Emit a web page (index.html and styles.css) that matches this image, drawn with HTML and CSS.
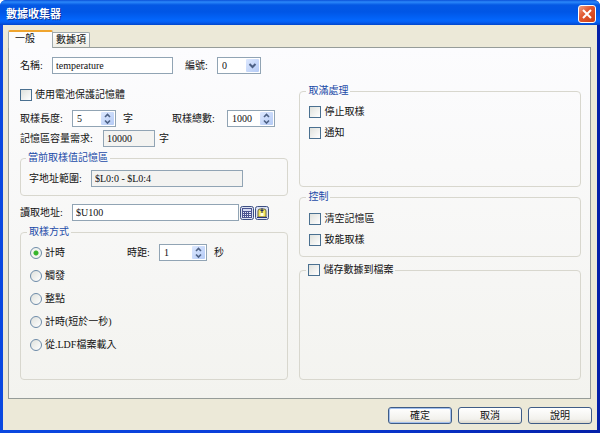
FILE: index.html
```html
<!DOCTYPE html>
<html lang="zh-Hant">
<head>
<meta charset="utf-8">
<title>數據收集器</title>
<link rel="stylesheet" href="styles.css">
</head>
<body>
<svg class="defs" aria-hidden="true">
  <symbol id="arrows" viewBox="0 0 13 13">
    <path d="M4 5 6.500 2.500 9 5M4 8.500l2.500 2.500L9 8.500" fill="none" stroke="#4d6185" stroke-width="1.600"/>
  </symbol>
</svg>
<form class="window">
  <header class="titlebar">
    <h1>數據收集器</h1>
    <button type="button" class="close" aria-label="關閉">
      <svg viewBox="0 0 16 16"><path d="M4 4l8 8M12 4l-8 8" stroke="#fff" stroke-width="2"/></svg>
    </button>
  </header>
  <main class="client">
    <nav class="tabs" role="tablist">
      <button type="button" role="tab" class="tab active" aria-selected="true">一般</button>
      <button type="button" role="tab" class="tab" aria-selected="false">數據項</button>
    </nav>
    <section class="panel">
      <div class="row name-row">
        <label class="caption" for="name">名稱:</label>
        <input class="box name" id="name" type="text" value="temperature">
        <label class="caption id-label" for="number">編號:</label>
        <span class="box combo">
          <select id="number"><option>0</option></select>
          <svg class="arrow" viewBox="0 0 13 13" aria-hidden="true"><path d="M3.500 5l3 3 3-3" fill="none" stroke="#4d6185" stroke-width="2"/></svg>
        </span>
      </div>
      <div class="columns">
        <div class="column left">
          <label class="row check"><input type="checkbox">使用電池保護記憶體</label>
          <div class="row length-row">
            <label class="caption wide" for="length">取樣長度:</label>
            <span class="box spin"><input id="length" type="number" value="5"><svg class="arrow" aria-hidden="true"><use href="#arrows"/></svg></span>
            <span class="unit">字</span>
            <label class="caption wide total-label" for="total">取樣總數:</label>
            <span class="box spin large"><input id="total" type="number" value="1000"><svg class="arrow" aria-hidden="true"><use href="#arrows"/></svg></span>
          </div>
          <div class="row memory-row">
            <label class="caption memory" for="memory">記憶區容量需求:</label>
            <input class="box readonly amount" id="memory" type="text" value="10000" readonly>
            <span class="unit near">字</span>
          </div>
          <fieldset class="range">
            <legend>當前取樣值記憶區</legend>
            <div class="row">
              <label class="caption range-label" for="range">字地址範圍:</label>
              <input class="box readonly address" id="range" type="text" value="$L0:0 - $L0:4" readonly>
            </div>
          </fieldset>
          <div class="row read-row">
            <label class="caption wide" for="read">讀取地址:</label>
            <input class="box read" id="read" type="text" value="$U100">
            <button type="button" class="tool" aria-label="鍵盤">
              <svg viewBox="0 0 14 14"><rect x=".5" y=".5" width="13" height="13" rx="2" fill="#dce2f2" stroke="#3c4f83"/><path d="M2 2h10v10H2z" fill="#4a5490"/><path d="M3 3h8v2H3z" fill="#d5dcf4"/><path d="M3 6h1v1H3zM5 6h1v1H5zM7 6h1v1H7zM9 6h2v1H9zM3 8h1v1H3zM5 8h1v1H5zM7 8h1v1H7zM9 8h2v1H9zM3 10h1v1H3zM5 10h1v1H5zM7 10h1v1H7zM9 10h2v1H9z" fill="#e8ecff"/></svg>
            </button>
            <button type="button" class="tool" aria-label="標籤">
              <svg viewBox="0 0 14 14"><rect x=".5" y=".5" width="13" height="13" rx="2" fill="#dce2f2" stroke="#3c4f83"/><path d="M3 11V5q0-2 2-2h4q2 0 2 2v6z" fill="#f3e65c" stroke="#6a6740"/><path d="M5.500 7h3v3h-3z" fill="#fffde0"/><path d="M7 2v5M5.500 4.500h3" stroke="#202b66"/><path d="M2 11.500h10" stroke="#25317c"/></svg>
            </button>
          </div>
          <fieldset class="method">
            <legend>取樣方式</legend>
            <div class="row option">
              <label class="radio"><input type="radio" name="method" checked>計時</label>
              <label class="caption interval-label" for="interval">時距:</label>
              <span class="box spin large"><input id="interval" type="number" value="1"><svg class="arrow" aria-hidden="true"><use href="#arrows"/></svg></span>
              <span class="unit">秒</span>
            </div>
            <label class="row option radio"><input type="radio" name="method">觸發</label>
            <label class="row option radio"><input type="radio" name="method">整點</label>
            <label class="row option radio"><input type="radio" name="method">計時(短於一秒)</label>
            <label class="row option radio"><input type="radio" name="method">從.LDF檔案載入</label>
          </fieldset>
        </div>
        <div class="column right">
          <fieldset class="full">
            <legend>取滿處理</legend>
            <label class="row check"><input type="checkbox">停止取樣</label>
            <label class="row check"><input type="checkbox">通知</label>
          </fieldset>
          <fieldset class="control">
            <legend>控制</legend>
            <label class="row check"><input type="checkbox">清空記憶區</label>
            <label class="row check"><input type="checkbox">致能取樣</label>
          </fieldset>
          <fieldset class="save">
            <legend><label class="check"><input type="checkbox">儲存數據到檔案</label></legend>
          </fieldset>
        </div>
      </div>
    </section>
    <footer class="actions">
      <button type="submit" class="default">確定</button>
      <button type="button">取消</button>
      <button type="button">說明</button>
    </footer>
  </main>
</form>
</body>
</html>
```
FILE: styles.css
```css
* { box-sizing: border-box; }

body {
  margin: 0;
  background: #fff;
  color: #111;
  font: 10px/14px "Liberation Serif", "Noto Sans CJK TC", serif;
}

button, input, select { font: inherit; color: inherit; margin: 0; padding: 0; }
.defs { display: none; }

.window {
  display: flex;
  flex-direction: column;
  min-height: 100vh;
  padding: 0 3px 3px;
  border-radius: 6px 6px 0 0;
  background: linear-gradient(90deg, #0a48e0, #0a3cd8 50%, #0420a8);
  overflow: hidden;
}

.titlebar {
  display: flex;
  align-items: center;
  justify-content: space-between;
  height: 25px;
  margin: 0 -3px;
  padding: 2px 4px 0 6px;
  background: linear-gradient(#0a50d8, #2b88fa 2px, #0458e4 5px, #0056e6 12px, #0366fc 20px, #0560f4 22px, #0146cc);
}

.titlebar h1 {
  margin: 0;
  color: #fff;
  font-size: 11px;
  text-shadow: 1px 1px #0b2f94;
}

.close {
  width: 18px;
  height: 18px;
  border: 1px solid #fff;
  border-radius: 3px;
  background: linear-gradient(135deg, #f0a083, #e25a32 40%, #cc3d14);
}
.close svg { display: block; width: 16px; height: 16px; }

.client {
  display: flex;
  flex: 1;
  flex-direction: column;
  padding: 5px 6px 6px 5px;
  background: #ece9d8;
}

.tabs { display: flex; align-items: flex-end; height: 17px; }

.tab {
  height: 15px;
  padding: 0 3px;
  border: 1px solid #a0aaae;
  border-left: 0;
  border-bottom: 0;
  border-radius: 0 2px 0 0;
  background: linear-gradient(#fff, #efeee6);
}

.tab.active {
  z-index: 1;
  height: 18px;
  margin-bottom: -1px;
  padding: 0 17px 2px 6px;
  border-left: 1px solid #a0aaae;
  border-top: 2px solid #f0a52e;
  border-radius: 2px 2px 0 0;
  background: #fcfcfd;
}

.panel {
  display: flex;
  flex: 1;
  flex-direction: column;
  gap: 10px;
  padding: 9px 9px 18px 11px;
  border: 1px solid #969c99;
  background: linear-gradient(#fcfcfe, #f3f3ef);
}

.columns {
  display: grid;
  flex: 1;
  grid-template-columns: 268fr 281fr;
  gap: 11px;
}
.column { display: flex; flex-direction: column; min-width: 0; }
.left { padding-top: 2px; }

.row { display: flex; align-items: center; height: 17px; }
.caption { flex: none; }
.name-row .caption { width: 32px; }
.caption.wide { width: 52px; }
.caption.memory { width: 83px; }
.caption.range-label { width: 62px; }
.name-row .id-label { width: 32px; margin-left: 12px; }

.box {
  height: 17px;
  border: 1px solid #91a4b4;
  background: #fff;
}
input.box { min-width: 0; padding: 0 3px; }
.box.readonly { background: #f3f3f1; }
.name { width: 121px; }
.amount { width: 52px; }
.address { width: 152px; }
.read { width: 167px; }

.combo, .spin { display: flex; flex: none; align-items: center; width: 44px; padding: 1px; }
.spin.large { width: 48px; }
.combo select, .spin input {
  flex: 1;
  min-width: 0;
  height: 13px;
  padding-left: 3px;
  border: 0;
  background: none;
  appearance: none;
}
.spin input { appearance: textfield; }
.spin input::-webkit-inner-spin-button { appearance: none; }

.arrow {
  flex: none;
  width: 13px;
  height: 13px;
  border-radius: 1px;
  background: linear-gradient(135deg, #dde8fe, #b5cbf6);
}

.unit { margin-left: 7px; }
.unit.near { margin-left: 4px; }

.length-row { margin-top: 7px; }
.total-label { margin-left: 39px; }
.caption.wide.total-label { width: 55px; }
.memory-row { margin-top: 3px; }

input[type="checkbox"], input[type="radio"] {
  flex: none;
  width: 12px;
  height: 12px;
  border: 1px solid #4a7090;
  background: linear-gradient(135deg, #dfe1dc, #fff);
  appearance: none;
}
input[type="radio"] { border-color: #6d8ba8; border-radius: 50%; }
input[type="radio"]:checked {
  background: radial-gradient(circle, #35b52c 2px, #f2f4f0 3px);
}

.check, .radio { display: flex; align-items: center; gap: 3px; }

fieldset {
  min-width: 0;
  margin: 0;
  padding: 4px 9px;
  border: 1px solid #d8d7ce;
  border-radius: 4px;
}
legend { height: 14px; margin-left: -3px; padding: 0 2px; color: #1c4ba8; }

.range { margin-top: 4px; padding: 5px 8px 8px; }
.read-row { margin-top: 8px; }
.tool { width: 14px; height: 14px; margin-left: 1px; border: 0; background: none; }
.tool svg { display: block; width: 14px; height: 14px; }

.method { flex: 1; margin-top: 4px; padding: 5px 9px; }
.option { margin-bottom: 6px; }
.interval-label { width: 32px; margin-left: 62px; }

.right fieldset .check { margin-bottom: 4px; }
.full { min-height: 103px; padding-top: 5px; }
.control { min-height: 65px; margin-top: 3px; padding-top: 6px; }
.save { flex: 1; margin-top: 6px; }
.save legend { color: #111; }
.right .save .check { margin: 0; }

.actions { display: flex; justify-content: flex-end; gap: 6px; padding-top: 8px; margin-right: -1px; }
.actions button {
  width: 64px;
  height: 17px;
  border: 1px solid #3f5c86;
  border-radius: 3px;
  background: linear-gradient(#fff, #f2f1ec 75%, #dcd8cc);
}
.actions .default { box-shadow: inset 0 0 0 1px #a3c0ee; }
```
